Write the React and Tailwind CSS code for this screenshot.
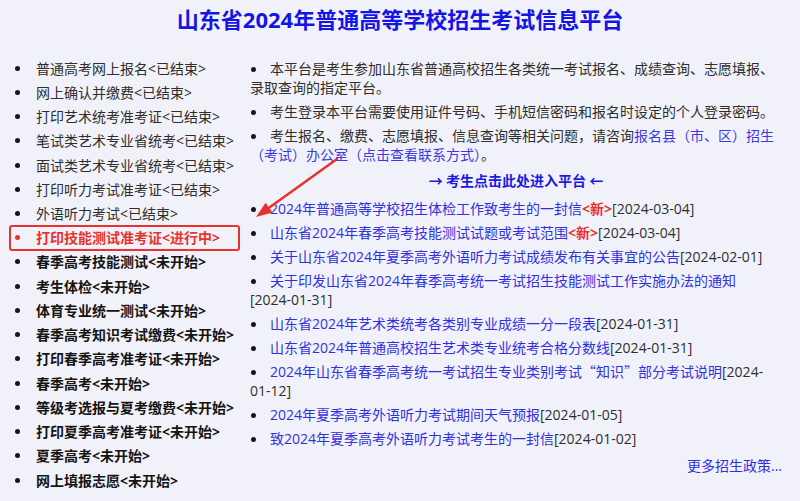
import React from "react";

const FONT = { fontFamily: '"Open Sans", "Noto Sans CJK SC", sans-serif' };
const CJK = { fontFamily: '"Noto Sans CJK SC", sans-serif' };

const leftItems = [
  ["普通高考网上报名<已结束>", "done"],
  ["网上确认并缴费<已结束>", "done"],
  ["打印艺术统考准考证<已结束>", "done"],
  ["笔试类艺术专业省统考<已结束>", "done"],
  ["面试类艺术专业省统考<已结束>", "done"],
  ["打印听力考试准考证<已结束>", "done"],
  ["外语听力考试<已结束>", "done"],
  ["打印技能测试准考证<进行中>", "active"],
  ["春季高考技能测试<未开始>", "todo"],
  ["考生体检<未开始>", "todo"],
  ["体育专业统一测试<未开始>", "todo"],
  ["春季高考知识考试缴费<未开始>", "todo"],
  ["打印春季高考准考证<未开始>", "todo"],
  ["春季高考<未开始>", "todo"],
  ["等级考选报与夏考缴费<未开始>", "todo"],
  ["打印夏季高考准考证<未开始>", "todo"],
  ["夏季高考<未开始>", "todo"],
  ["网上填报志愿<未开始>", "todo"],
];

const news = [
  { t: "2024年普通高等学校招生体检工作致考生的一封信", d: "[2024-03-04]", isNew: true },
  { t: "山东省2024年春季高考技能测试试题或考试范围", d: "[2024-03-04]", isNew: true },
  { t: "关于山东省2024年夏季高考外语听力考试成绩发布有关事宜的公告", d: "[2024-02-01]" },
  { t: "关于印发山东省2024年春季高考统一考试招生技能测试工作实施办法的通知", d: "[2024-01-31]" },
  { t: "山东省2024年艺术类统考各类别专业成绩一分一段表", d: "[2024-01-31]" },
  { t: "山东省2024年普通高校招生艺术类专业统考合格分数线", d: "[2024-01-31]" },
  {
    t: (
      <>
        2024年山东省春季高考统一考试招生专业类别考试<span style={CJK}>“知识”</span>部分考试说明
      </>
    ),
    d: "split",
  },
  { t: "2024年夏季高考外语听力考试期间天气预报", d: "[2024-01-05]" },
  { t: "致2024年夏季高考外语听力考试考生的一封信", d: "[2024-01-02]" },
];

function Bullet() {
  return (
    <span className="inline-block w-[5px] h-[5px] rounded-full bg-[#151515] align-middle ml-[1px] mr-[14px] -mt-[2px]" />
  );
}

export default function App() {
  return (
    <div className="relative w-[800px] h-[501px] overflow-hidden bg-[#f1f2f9] text-[14px]" style={FONT}>
      <div className="h-[40px] flex items-center justify-center">
        <h1 className="text-[22px] font-bold text-[#1414e6] leading-none -mt-[3px]">
          山东省2024年普通高等学校招生考试信息平台
        </h1>
      </div>

      <div className="flex">
        {/* left column */}
        <ul className="w-[250px] shrink-0 mt-[16px]">
          {leftItems.map(([text, kind]) =>
            kind === "active" ? (
              <li
                key={text}
                className="ml-[9px] w-[231px] h-[26px] -my-[1px] border-2 border-[#e8322d] rounded-[3px] flex items-center font-bold text-[#e8322d] whitespace-nowrap"
              >
                <span className="w-[25px] pl-[4px] flex items-center">
                  <span className="w-[5px] h-[5px] rounded-full bg-[#e8322d]" />
                </span>
                <span>{text}</span>
              </li>
            ) : (
              <li
                key={text}
                className={
                  "h-[24.25px] flex items-center whitespace-nowrap " +
                  (kind === "todo" ? "font-bold text-[#141414]" : "text-[#2e2e2e]")
                }
              >
                <span className="w-[36px] pl-[15px] flex items-center">
                  <span className="w-[5px] h-[5px] rounded-full bg-[#151515]" />
                </span>
                <span>{text}</span>
              </li>
            )
          )}
        </ul>

        {/* right column */}
        <div className="w-[532px] shrink-0 pt-[19px] text-[#2e2e2e]">
          <p className="leading-[19px]">
            <Bullet />
            本平台是考生参加山东省普通高校招生各类统一考试报名、成绩查询、志愿填报、录取查询的指定平台。
          </p>
          <p className="leading-[19px] mt-[5px]">
            <Bullet />
            考生登录本平台需要使用证件号码、手机短信密码和报名时设定的个人登录密码。
          </p>
          <p className="leading-[19px] mt-[5px]">
            <Bullet />
            考生报名、缴费、志愿填报、信息查询等相关问题，请咨询
            <span className="text-[#3a3ae0]">报名县（市、区）招生（考试）办公室（点击查看联系方式）</span>。
          </p>
          <p className="leading-[19px] mt-[7px] text-center font-bold text-[#1a1ae0]" style={CJK}>
            → 考生点击此处进入平台 ←
          </p>

          <ul className="mt-[9px]">
            {news.map((n, i) => (
              <li key={i} className={"leading-[19px] " + (i > 0 ? "mt-[5px]" : "")}>
                <Bullet />
                <span className="text-[#3030e0]">{n.t}</span>
                {n.isNew && <span className="font-bold text-[#e8322d]">&lt;新&gt;</span>}
                {n.d === "split" ? (
                  <span>
                    [2024-
                    <br />
                    01-12]
                  </span>
                ) : (
                  <span className="whitespace-nowrap">{n.d}</span>
                )}
              </li>
            ))}
          </ul>
          <p className="leading-[19px] mt-[8px] text-right text-[#3030e0]">更多招生政策...</p>
        </div>
      </div>

      <svg className="absolute left-0 top-0 pointer-events-none" width="800" height="501" viewBox="0 0 800 501">
        <line x1="337" y1="159" x2="268" y2="208.5" stroke="#e8322d" strokeWidth="2.5" strokeLinecap="round" />
        <polygon points="256,217 272.6,212.6 265.6,202.8" fill="#e8322d" />
      </svg>
    </div>
  );
}
